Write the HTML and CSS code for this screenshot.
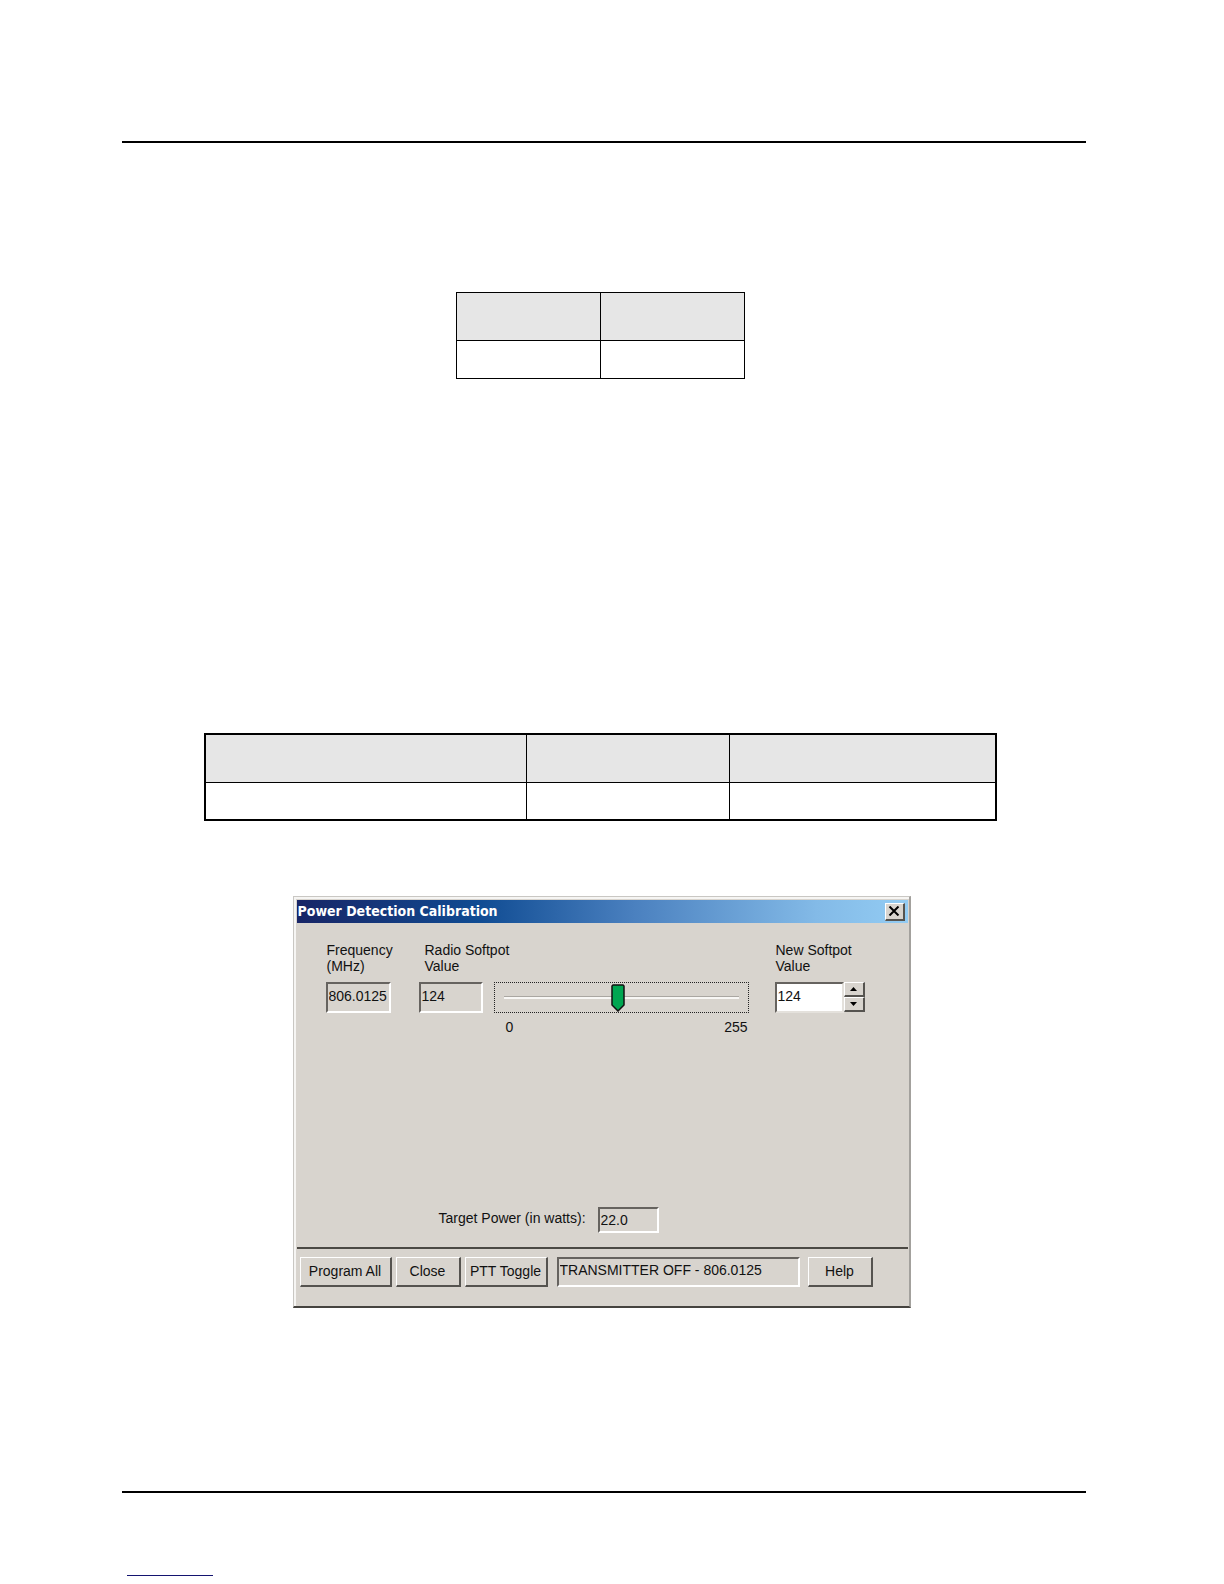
FILE: index.html
```html
<!DOCTYPE html>
<html lang="en">
<head>
<meta charset="utf-8">
<title>Power Detection Calibration</title>
<link rel="stylesheet" href="styles.css">
</head>
<body>
<main class="page">
  <div class="sheet">
    <table class="spec spec-small">
      <thead><tr><th></th><th></th></tr></thead>
      <tbody><tr><td></td><td></td></tr></tbody>
    </table>
    <table class="spec spec-wide">
      <colgroup><col class="col-a"><col class="col-b"><col class="col-c"></colgroup>
      <thead><tr><th></th><th></th><th></th></tr></thead>
      <tbody><tr><td></td><td></td><td></td></tr></tbody>
    </table>

    <section class="dialog">
      <header class="titlebar">
        <h1>Power Detection Calibration</h1>
        <button class="close" type="button" aria-label="Close window">
          <svg width="12" height="10" viewBox="0 0 12 10"><path d="M1.5 .5 10.500 9.500M10.500 .5 1.500 9.500" stroke="#000" stroke-width="2" fill="none"/></svg>
        </button>
      </header>
      <div class="tuning">
        <div class="group group-freq">
          <label for="freq">Frequency<br>(MHz)</label>
          <input class="field" id="freq" value="806.0125" readonly>
        </div>
        <div class="group group-radio">
          <label for="radio">Radio Softpot<br>Value</label>
          <input class="field" id="radio" value="124" readonly>
        </div>
        <div class="group group-slider">
          <div class="slider"><input type="range" min="0" max="255" value="124" aria-label="Softpot value"></div>
          <div class="scale"><span>0</span><span>255</span></div>
        </div>
        <div class="group group-new">
          <label for="new">New Softpot<br>Value</label>
          <div class="spin">
            <input class="field editable" id="new" value="124">
            <div class="arrows">
              <button type="button" aria-label="Increase"><svg width="7" height="4" viewBox="0 0 7 4"><path d="M0 4 3.500 0 7 4z"/></svg></button>
              <button type="button" aria-label="Decrease"><svg width="7" height="4" viewBox="0 0 7 4"><path d="M0 0 3.500 4 7 0z"/></svg></button>
            </div>
          </div>
        </div>
      </div>
      <div class="target">
        <label for="power">Target Power (in watts):</label>
        <input class="field" id="power" value="22.0" readonly>
      </div>
      <footer class="actions">
        <button class="btn btn-program" type="button">Program All</button>
        <button class="btn" type="button">Close</button>
        <button class="btn btn-ptt" type="button">PTT Toggle</button>
        <input class="field status" value="TRANSMITTER OFF - 806.0125" aria-label="Transmitter status" readonly>
        <button class="btn" type="button">Help</button>
      </footer>
    </section>
  </div>
  <div class="foot-line"></div>
</main>
</body>
</html>
```
FILE: styles.css
```css
* { box-sizing: border-box; }

body {
  margin: 0;
  background: #fff;
  color: #111;
  font: 14px/16px "Liberation Sans", Arial, sans-serif;
}

button, input { margin: 0; padding: 0; border-radius: 0; color: inherit; font: inherit; }

.page { padding: 141px 138px 8px 122px; }

.sheet {
  display: flex;
  flex-direction: column;
  align-items: center;
  padding: 149px 7px 183px 0;
  border-top: 2px solid #000;
  border-bottom: 2px solid #000;
}

.spec { border-collapse: collapse; table-layout: fixed; }
.spec th, .spec td { padding: 0; border: 1px solid #000; }
.spec th { height: 48px; background: #e6e6e6; }
.spec td { height: 38px; }
.spec-small { width: 289px; }
.spec-wide { width: 793px; margin: 354px 0 75px; border: 2px solid #000; }
.col-a { width: 321px; }
.col-b { width: 203px; }

.dialog {
  width: 618px;
  margin-left: 2px;
  border: 1px solid #c9c7c3;
  border-right: 2px solid #a3a19d;
  border-bottom: 2px solid #45433f;
  background: #d8d4ce;
  box-shadow: inset 2px 2px #f6f5f3;
  padding: 3px 1px 0 3px;
}

.titlebar {
  display: flex;
  align-items: center;
  justify-content: space-between;
  height: 23px;
  padding: 0 3px 0 1px;
  background: linear-gradient(90deg, #182566, #104c93 30%, #4a80bf 55%, #83bae7 85%, #93ccf3);
}

.titlebar h1 {
  margin: 0;
  padding-bottom: 2px;
  color: #fff;
  font: bold 14px/20px "DejaVu Sans Condensed", "DejaVu Sans", sans-serif;
}

.close, .btn, .arrows button {
  display: flex;
  align-items: center;
  justify-content: center;
  border: 1px solid #fff;
  border-right: 2px solid #55534f;
  border-bottom: 2px solid #55534f;
  background: #d8d4ce;
}

.close { width: 20px; height: 18px; }

.tuning { display: flex; align-items: flex-end; height: 114px; padding: 19px 42px 0 29px; }
.group { display: flex; flex-direction: column; height: 95px; }
.group label { height: 40px; padding-left: 1px; white-space: nowrap; }
.group-freq { width: 65px; }
.group-radio { width: 64px; margin-left: 28px; }
.group-radio label { padding-left: 6px; }
.group-slider { width: 255px; margin: 0 26px 0 11px; padding-top: 40px; }
.group-new { width: 90px; }

.field {
  display: block;
  width: 100%;
  height: 31px;
  padding: 0 0 4px 1px;
  border: 2px solid #fff;
  border-top-color: #66635f;
  border-left-color: #66635f;
  background: #d8d4ce;
  outline: 0;
}

.field.editable { width: 69px; background: #fff; border-right-color: #e4e1dc; border-bottom-color: #e4e1dc; }

.slider { height: 31px; padding: 0 9px; border: 1px dotted #222; }

.slider input {
  display: block;
  width: 100%;
  height: 29px;
  appearance: none;
  background: transparent;
}

.slider input::-webkit-slider-runnable-track {
  height: 28px;
  background: linear-gradient(#aaa7a2 0 1px, #f8f7f5 1px 3px) center 12px / 100% 3px no-repeat;
}

.slider input::-webkit-slider-thumb {
  appearance: none;
  width: 14px;
  height: 28px;
  background: url("data:image/svg+xml,%3Csvg xmlns='http://www.w3.org/2000/svg' viewBox='0 0 14 28'%3E%3Cpath d='M2 1h10l1 1v19l-6 6-6-6V2z' fill='%2300a651' stroke='%23111' stroke-width='1.500'/%3E%3C/svg%3E") no-repeat;
}

.scale { display: flex; justify-content: space-between; padding: 6px 1px 0 12px; }

.spin { display: flex; }
.arrows { width: 21px; }
.arrows button { width: 100%; height: 15px; }

.target { display: flex; padding: 170px 0 0 142px; }
.target label { width: 159px; padding-top: 3px; }
.target .field { width: 61px; height: 26px; padding-bottom: 1px; }

.actions {
  display: flex;
  gap: 4px;
  margin-top: 14px;
  padding: 8px 0 19px 3px;
  border-top: 2px solid #4b4944;
}

.btn { width: 65px; height: 30px; padding-bottom: 1px; }
.btn-program { width: 92px; }
.btn-ptt { width: 83px; white-space: nowrap; }
.status { width: 243px; height: 30px; margin: 0 4px 0 5px; }

.foot-line { width: 86px; height: 1px; margin: 82px 0 0 5px; background: #141470; }
```
